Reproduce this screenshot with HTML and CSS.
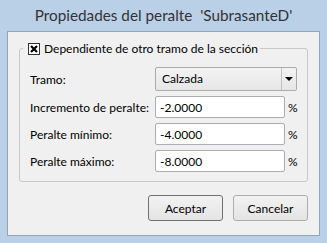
FILE: index.html
```html
<!DOCTYPE html>
<html lang="es">
  <head>
    <meta charset="UTF-8" />
    <title>Propiedades del peralte</title>
    <link rel="stylesheet" href="styles.css">
  </head>
  <body>
    <div class="window">
      <div class="titlebar">Propiedades del peralte&nbsp; 'SubrasanteD'</div>
      <div class="panel">
        <fieldset class="group">
          <legend>
            <span class="check">
              <svg width="12" height="12" viewBox="0 0 12 12">
                <rect x="0.5" y="0.5" width="11" height="11" fill="#fff" stroke="#333"/>
                <path d="M3 3 L9 9 M9 3 L3 9" stroke="#000" stroke-width="2.2"/>
              </svg>
            </span>
            Dependiente de otro tramo de la sección
          </legend>
          <div class="form">
            <label>Tramo:</label>
            <div class="combo">
              <span class="combo-text">Calzada</span>
              <span class="combo-btn"><span class="arrow"></span></span>
            </div>

            <label>Incremento de peralte:</label>
            <input class="field" type="text" value="-2.0000">
            <span class="unit">%</span>

            <label>Peralte mínimo:</label>
            <input class="field" type="text" value="-4.0000">
            <span class="unit">%</span>

            <label>Peralte máximo:</label>
            <input class="field" type="text" value="-8.0000">
            <span class="unit">%</span>
          </div>
        </fieldset>
        <div class="buttons">
          <button class="btn default">Aceptar</button>
          <button class="btn">Cancelar</button>
        </div>
      </div>
    </div>
  </body>
</html>
```

FILE: styles.css
```css
body {
  margin: 0;
  font-family: Lato, "Liberation Sans", sans-serif;
  font-size: 12px;
  color: #000;
}
.window {
  width: 327px;
  height: 243px;
  box-sizing: border-box;
  background-color: #bad0e7;
  padding: 0 7px 7px 7px;
}
.titlebar {
  height: 31px;
  line-height: 30px;
  text-align: center;
  font-size: 15.3px;
  color: #333;
  white-space: pre;
}
.panel {
  height: 205px;
  box-sizing: border-box;
  background-color: #f0f0f0;
  border: 1px solid #90a6bd;
}
.group {
  margin: 10px 11px 0 11px;
  padding: 12px 0 9px 10px;
  border: 1px solid #c8c8c8;
  border-radius: 3px;
}
.group legend {
  margin-left: -7px;
  padding: 0 2px 0 5px;
  height: 13px;
  display: flex;
  align-items: center;
  gap: 4px;
  line-height: 13px;
}
.check {
  width: 12px;
  height: 12px;
  display: flex;
}
.form {
  display: grid;
  grid-template-columns: 125px 130px 12px;
  grid-template-rows: 24px 22px 22px 22px;
  row-gap: 5px;
  align-items: center;
}
.form label {
  white-space: nowrap;
}
.combo {
  grid-column: span 2;
  height: 24px;
  box-sizing: border-box;
  display: flex;
  border: 1px solid #acacac;
  border-radius: 2px;
  background: linear-gradient(#f3f3f3, #e6e6e6);
}
.combo-text {
  flex: 1;
  padding-left: 6px;
  line-height: 22px;
}
.combo-btn {
  width: 14px;
  border-left: 1px solid #c2c2c2;
  display: flex;
  align-items: center;
  justify-content: center;
}
.arrow {
  width: 0;
  height: 0;
  border-left: 4px solid transparent;
  border-right: 4px solid transparent;
  border-top: 4px solid #000;
}
.field {
  width: 130px;
  height: 22px;
  box-sizing: border-box;
  margin: 0;
  padding: 0 4px;
  border: 1px solid #abadb3;
  border-radius: 2px;
  background-color: #fff;
  font-family: inherit;
  font-size: 12px;
  color: #000;
}
.unit {
  padding-left: 3px;
}
.buttons {
  display: flex;
  justify-content: flex-end;
  gap: 10px;
  margin-top: 13px;
  padding-right: 11px;
}
.btn {
  width: 75px;
  height: 26px;
  box-sizing: border-box;
  border: 1px solid #acacac;
  border-radius: 3px;
  background: linear-gradient(#f2f2f2, #e4e4e4);
  font-family: inherit;
  font-size: 12px;
  color: #000;
  padding: 0;
}
.btn.default {
  border-color: #707070;
}
```
